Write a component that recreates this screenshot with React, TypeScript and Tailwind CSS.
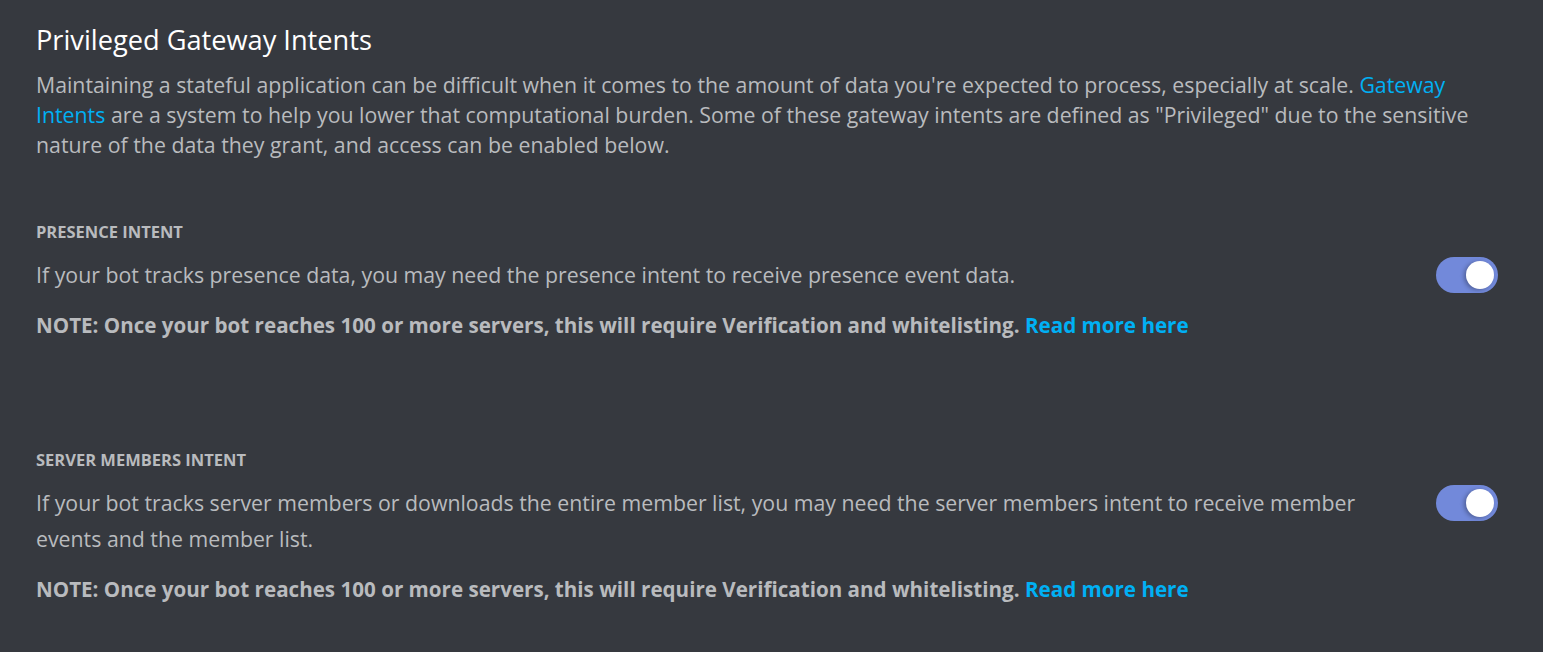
import React from 'react'

const FONT = { fontFamily: '"Open Sans", "Noto Sans", sans-serif' }

const Toggle = () => (
  <div className="relative h-[36px] w-[62px] shrink-0 rounded-full bg-[#7289da]">
    <div className="absolute right-[4px] top-[4px] h-[28px] w-[28px] rounded-full bg-white shadow-[-2px_1px_4px_rgba(0,0,0,0.3)]" />
  </div>
)

const Note = () => (
  <p className="mt-[17px] text-[20.6px] font-bold leading-[30px] text-[#b9bbbe]">
    NOTE: Once your bot reaches 100 or more servers, this will require Verification and whitelisting.{' '}
    <a className="text-[#00b0f4]">Read more here</a>
  </p>
)

const Intent = ({ title, desc }: { title: string; desc: string }) => (
  <div>
    <h3 className="text-[16.5px] font-bold uppercase leading-[20px] text-[#b9bbbe]">{title}</h3>
    <div className="mt-[15px] flex items-start justify-between">
      <p className="max-w-[1330px] text-[21.3px] leading-[36px] text-[#b9bbbe]">{desc}</p>
      <Toggle />
    </div>
    <Note />
  </div>
)

export default function App() {
  return (
    <div className="min-h-screen bg-[#36393f] px-[36px] pt-[24px]" style={FONT}>
      <div className="w-[1462px]">
        <h1 className="text-[27.2px] leading-[32px] text-white">Privileged Gateway Intents</h1>
        <p className="mt-[14px] text-[21.3px] leading-[30px] text-[#b9bbbe]">
          Maintaining a stateful application can be difficult when it comes to the amount of data you're expected to
          process, especially at scale. <a className="text-[#00b0f4]">Gateway Intents</a> are a system to help you
          lower that computational burden. Some of these gateway intents are defined as "Privileged" due to the
          sensitive nature of the data they grant, and access can be enabled below.
        </p>
        <div className="mt-[62px] flex flex-col gap-[110px]">
          <Intent
            title="Presence Intent"
            desc="If your bot tracks presence data, you may need the presence intent to receive presence event data."
          />
          <Intent
            title="Server Members Intent"
            desc="If your bot tracks server members or downloads the entire member list, you may need the server members intent to receive member events and the member list."
          />
        </div>
      </div>
    </div>
  )
}
